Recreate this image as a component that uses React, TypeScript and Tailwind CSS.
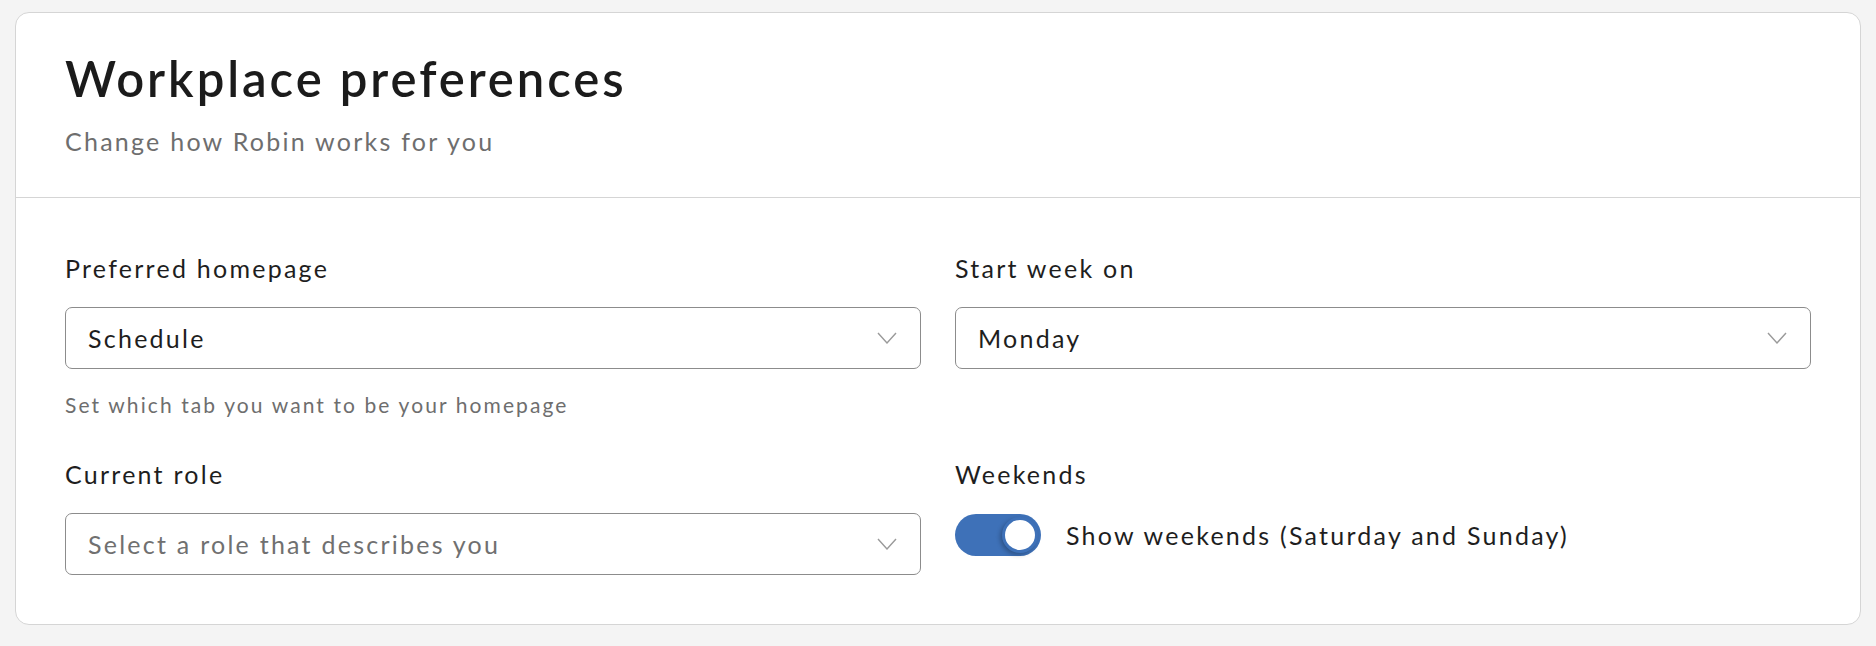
import { useState } from "react";

const Chevron = () => (
  <svg width="20" height="12" viewBox="0 0 20 12" fill="none" className="shrink-0">
    <polyline points="1,1 10,11 19,1" stroke="#9a9a9a" strokeWidth="1.4" fill="none" />
  </svg>
);

const Select = ({ value, placeholder }: { value?: string; placeholder?: string }) => (
  <div className="flex h-[62px] items-center justify-between rounded-[7px] border-[1.5px] border-[#8c8c8c] bg-white pl-[22px] pr-[23px]">
    <span className={`text-[25px] leading-[30px] tracking-[0.09em] ${value ? "text-[#1e1e1e]" : "text-[#707070]"}`}>
      {value ?? placeholder}
    </span>
    <Chevron />
  </div>
);

const Label = ({ children }: { children: React.ReactNode }) => (
  <div className="mb-[24px] text-[25px] leading-[30px] tracking-[0.09em] text-[#1e1e1e]">{children}</div>
);

export default function App() {
  const [weekends, setWeekends] = useState(true);

  return (
    <div className="h-[646px] bg-[#f4f4f4] px-[15px] pt-[12px] font-['Lato',sans-serif]">
      <div className="rounded-[14px] border border-[#d5d5d5] bg-white">
        {/* Header */}
        <div className="border-b border-[#d5d5d5] px-[49px] pt-[37px] pb-[41px]">
          <h1 className="text-[49px] font-semibold leading-[56px] tracking-[0.06em] text-[#1b1b1b]">
            Workplace preferences
          </h1>
          <p className="mt-[20px] text-[25px] leading-[30px] tracking-[0.09em] text-[#6e6e6e]">
            Change how Robin works for you
          </p>
        </div>

        {/* Body */}
        <div className="grid grid-cols-2 gap-x-[34px] px-[49px] pt-[55px] pb-[49px]">
          <div>
            <Label>Preferred homepage</Label>
            <Select value="Schedule" />
            <p className="mt-[23px] text-[21px] leading-[26px] tracking-[0.1em] text-[#6e6e6e]">
              Set which tab you want to be your homepage
            </p>
          </div>
          <div>
            <Label>Start week on</Label>
            <Select value="Monday" />
          </div>

          <div className="mt-[41px]">
            <Label>Current role</Label>
            <Select placeholder="Select a role that describes you" />
          </div>
          <div className="mt-[41px]">
            <Label>Weekends</Label>
            <div className="flex items-center gap-[25px]">
              <button
                onClick={() => setWeekends(!weekends)}
                className={`relative mt-[1px] h-[42px] w-[86px] shrink-0 rounded-full ${weekends ? "bg-[#3e71b8]" : "bg-[#c4c4c4]"}`}
              >
                <span
                  className={`absolute top-[3px] h-[36px] w-[36px] rounded-full border-[3px] border-[#3e71b8] bg-white shadow-[-2px_2px_4px_rgba(0,0,0,0.25)] ${weekends ? "right-[3px]" : "left-[3px]"}`}
                />
              </button>
              <span className="text-[25px] leading-[30px] tracking-[0.09em] text-[#1e1e1e]">
                Show weekends (Saturday and Sunday)
              </span>
            </div>
          </div>
        </div>
      </div>
    </div>
  );
}
